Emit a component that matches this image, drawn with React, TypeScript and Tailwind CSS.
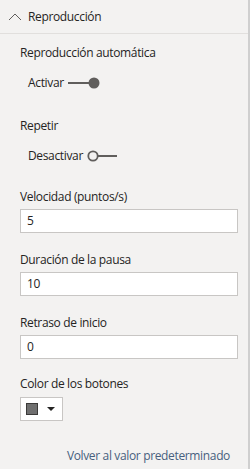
import React from "react";

function Field({ label, value }: { label: string; value: string }) {
  return (
    <div className="flex flex-col">
      <div className="h-[16px] leading-[16px]">{label}</div>
      <div className="mt-[4px] h-[24px] w-[218px] border border-[#c8c6c4] bg-white pl-[6px] leading-[22px]">
        {value}
      </div>
    </div>
  );
}

export default function App() {
  return (
    <div
      className="h-[469px] w-[250px] overflow-hidden bg-[#f3f2f1] text-[12px] tracking-[-0.35px] text-[#252423] border-r-2 border-[#cfcfcf]"
      style={{ fontFamily: '"Open Sans", "Noto Sans", sans-serif' }}
    >
      <div className="flex h-[34px] items-center border-b border-[#e1dfdd] pl-[8px]">
        <svg width="14" height="10" viewBox="0 0 14 10" className="mr-[6px]">
          <path d="M1 8 L7 2 L13 8" fill="none" stroke="#605e5c" strokeWidth="1" />
        </svg>
        <span>Reproducción</span>
      </div>

      <div className="flex flex-col pl-[20px]">
        <div className="mt-[11px] h-[16px] leading-[16px]">Reproducción automática</div>
        <div className="mt-[14px] flex h-[16px] items-center pl-[8px]">
          <span>Activar</span>
          <svg width="34" height="12" viewBox="0 0 34 12" className="ml-[3px]">
            <line x1="1" y1="6" x2="22" y2="6" stroke="#605e5c" strokeWidth="2" />
            <circle cx="27" cy="6" r="5.5" fill="#605e5c" />
          </svg>
        </div>

        <div className="mt-[27px] h-[16px] leading-[16px]">Repetir</div>
        <div className="mt-[14px] flex h-[16px] items-center pl-[8px]">
          <span>Desactivar</span>
          <svg width="32" height="12" viewBox="0 0 32 12" className="ml-[4px]">
            <circle cx="6" cy="6" r="4.7" fill="none" stroke="#605e5c" strokeWidth="1.8" />
            <line x1="11" y1="6" x2="30" y2="6" stroke="#605e5c" strokeWidth="2" />
          </svg>
        </div>

        <div className="mt-[25px]">
          <Field label="Velocidad (puntos/s)" value="5" />
        </div>
        <div className="mt-[19px]">
          <Field label="Duración de la pausa" value="10" />
        </div>
        <div className="mt-[19px]">
          <Field label="Retraso de inicio" value="0" />
        </div>

        <div className="mt-[17px] h-[16px] leading-[16px]">Color de los botones</div>
        <div className="mt-[5px] flex h-[24px] w-[43px] items-center border border-[#c8c6c4] bg-white pl-[5px]">
          <div className="h-[12px] w-[12px] border border-[#3b3a39] bg-[#6f6f6f]" />
          <svg width="8" height="5" viewBox="0 0 8 5" className="ml-[9px]">
            <path d="M0 0 L8 0 L4 4 Z" fill="#252423" />
          </svg>
        </div>
      </div>

      <div className="mt-[27px] pr-[18px] text-right leading-[16px] text-[#475f7e]">Volver al valor predeterminado</div>
    </div>
  );
}
